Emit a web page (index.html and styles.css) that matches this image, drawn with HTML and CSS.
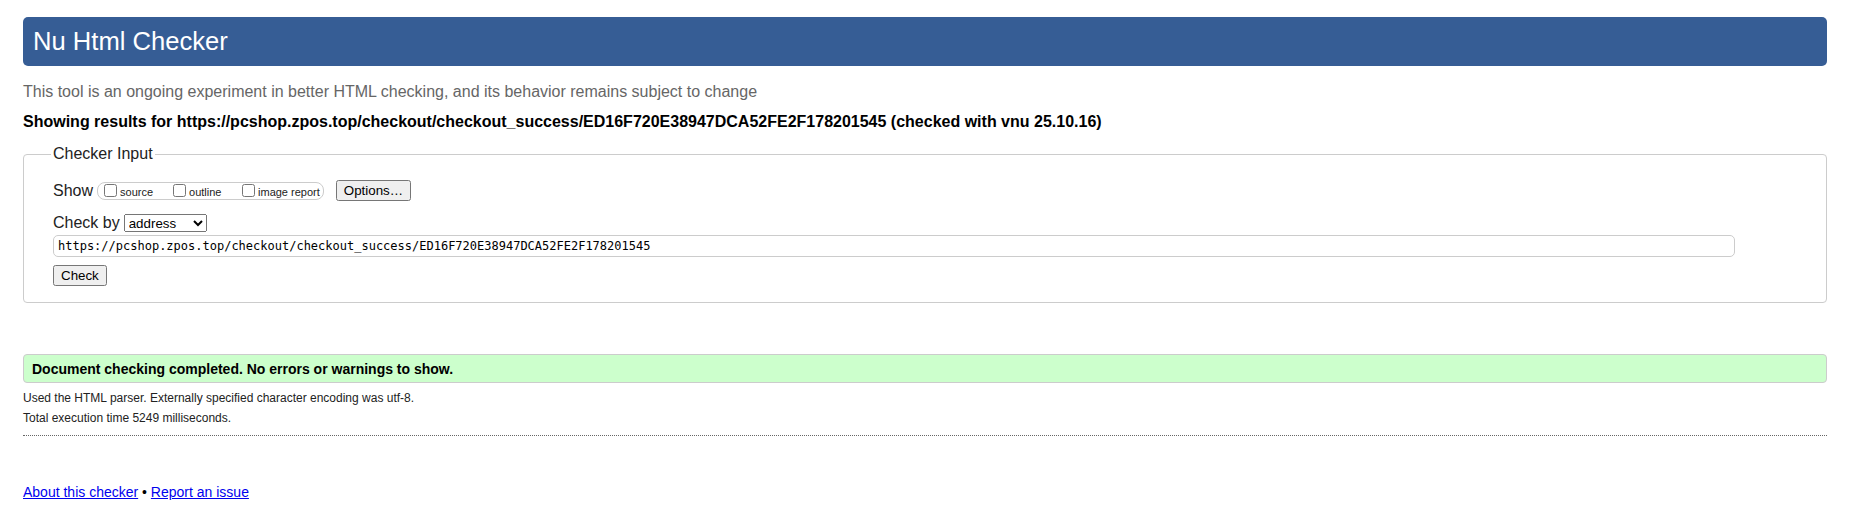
FILE: index.html
```html
<!DOCTYPE html>
<html lang="en">
<head>
<meta charset="utf-8">
<title>Showing results for https://pcshop.zpos.top/checkout/checkout_success/ED16F720E38947DCA52FE2F178201545 - Nu Html Checker</title>
<link rel="stylesheet" href="styles.css">
</head>
<body>
<h1 class="title">Nu Html Checker</h1>
<p class="intro">This tool is an ongoing experiment in better HTML checking, and its behavior remains subject to change</p>
<p class="results-for">Showing results for https://pcshop.zpos.top/checkout/checkout_success/ED16F720E38947DCA52FE2F178201545 (checked with vnu 25.10.16)</p>
<form class="checker-form">
  <fieldset class="checker-input">
    <legend class="checker-legend">Checker Input</legend>
    <div class="row row-show">
      <span class="row-label">Show</span>
      <fieldset class="show-group">
        <label class="opt"><input type="checkbox" class="chk"><span class="opt-text">source</span></label>
        <label class="opt"><input type="checkbox" class="chk"><span class="opt-text">outline</span></label>
        <label class="opt opt-last"><input type="checkbox" class="chk"><span class="opt-text">image report</span></label>
      </fieldset>
      <button type="button" class="btn btn-options">Options…</button>
    </div>
    <div class="row row-by">
      <span class="row-label">Check by</span>
      <select class="by-select">
        <option>address</option>
        <option>file upload</option>
        <option>text input</option>
      </select>
    </div>
    <div class="row row-url">
      <input type="url" class="url-input" value="https://pcshop.zpos.top/checkout/checkout_success/ED16F720E38947DCA52FE2F178201545">
    </div>
    <div class="row row-submit">
      <button type="button" class="btn btn-check">Check</button>
    </div>
  </fieldset>
</form>
<p class="success">Document checking completed. No errors or warnings to show.</p>
<p class="details">Used the HTML parser. Externally specified character encoding was utf-8.</p>
<p class="details">Total execution time 5249 milliseconds.</p>
<hr class="sep">
<p class="footer"><a href="#" class="footer-link">About this checker</a> • <a href="#" class="footer-link">Report an issue</a></p>
</body>
</html>
```
FILE: styles.css
```css
html, body {
  background: #fff;
}
body {
  margin: 0;
  padding: 17px 31px 0 23px;
  font-family: "Liberation Sans", Arial, sans-serif;
  color: #000;
}
.title {
  margin: 0;
  height: 49px;
  line-height: 49px;
  padding: 0 10px;
  background: #365d95;
  color: #fff;
  font-size: 25.6px;
  font-weight: normal;
  border-radius: 5px;
}
.intro {
  margin: 16px 0 0;
  font-size: 16px;
  line-height: 20px;
  color: #666;
}
.results-for {
  margin: 10px 0 0;
  font-size: 16px;
  line-height: 20px;
  font-weight: bold;
}
.checker-form {
  margin: 13px 0 0;
}
.checker-input {
  margin: 0;
  padding: 17px 29px 16px 29px;
  border: 1px solid #ccc;
  border-radius: 4px;
  min-width: 0;
}
.checker-legend {
  padding: 0 2px;
  margin-left: -2px;
  font-size: 16px;
  color: #222;
}
.row {
  display: flex;
  align-items: center;
}
.row-label {
  font-size: 16px;
  color: #222;
}
.show-group {
  display: flex;
  align-items: center;
  margin: 0 0 0 4px;
  padding: 0 3px 0 2px;
  height: 16px;
  border: 1px solid #ccc;
  border-radius: 8px;
  min-width: 0;
}
.opt {
  display: flex;
  align-items: center;
  width: 69px;
  font-size: 11px;
  color: #222;
}
.opt-last {
  width: auto;
}
.chk {
  margin: 0 3px 0 4px;
  width: 13px;
  height: 13px;
}
.opt-text {
  padding-top: 3px;
}
.btn {
  font-family: "Liberation Sans", Arial, sans-serif;
  font-size: 13.33px;
  height: 21px;
  padding: 0 6px;
}
.btn-options {
  margin-left: 12px;
}
.row-by {
  margin-top: 13px;
}
.by-select {
  margin-left: 4px;
  height: 18px;
  font-family: "Liberation Sans", Arial, sans-serif;
  font-size: 13.33px;
  padding: 0;
}
.row-url {
  margin-top: 3px;
}
.url-input {
  width: calc(100% - 62px);
  height: 22px;
  box-sizing: border-box;
  border: 1px solid #ccc;
  border-radius: 5px;
  padding: 0 4px;
  font-family: "DejaVu Sans Mono", "Liberation Mono", monospace;
  font-size: 12px;
  color: #000;
}
.row-submit {
  margin-top: 8px;
}
.success {
  margin: 51px 0 0;
  padding: 6px 8px 4px;
  line-height: 17px;
  background: #ccffcc;
  border: 1px solid #ccc;
  border-radius: 4px;
  font-size: 14px;
  font-weight: bold;
}
.details {
  margin: 0;
  font-size: 12px;
  line-height: 20px;
  color: #222;
}
.success + .details {
  margin-top: 5px;
}
.sep {
  margin: 7px 0 0;
  border: 0;
  border-top: 1px dotted #666;
  height: 0;
}
.footer {
  margin: 46px 0 0;
  font-size: 14px;
  line-height: 20px;
}
.footer-link {
  color: #0000ee;
}
```
